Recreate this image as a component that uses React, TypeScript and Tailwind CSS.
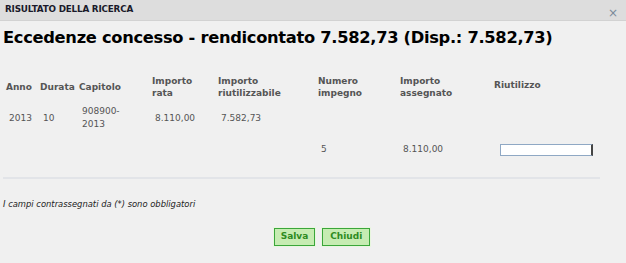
import React from "react";

const font = { fontFamily: '"DejaVu Sans", Verdana, sans-serif' };

export default function App() {
  return (
    <div className="w-[626px] h-[263px] bg-[#f0f0f0] overflow-hidden" style={font}>
      <div className="h-[21px] bg-[#dddddd] border-b border-[#d2d2d2] flex items-center justify-between pl-[5px] pr-[8px]">
        <span className="text-[8.8px] font-bold text-[#1a1a2a] tracking-[-0.2px]">RISULTATO DELLA RICERCA</span>
        <span className="text-[12px] text-[#7a8a9a] leading-none mt-[5px]">×</span>
      </div>
      <h1 className="text-[16.3px] font-bold text-black pl-[3px] pt-[7px] leading-[20px] tracking-[-0.3px]">
        Eccedenze concesso - rendicontato 7.582,73 (Disp.: 7.582,73)
      </h1>
      <div className="h-[136px] text-[9px] text-[#555555]">
        <div className="grid grid-cols-[34px_39px_73px_66px_100px_82px_94px_1fr] pl-[6px] pt-[23px] font-bold leading-[12px] items-center h-[55px]">
          <span>Anno</span>
          <span>Durata</span>
          <span>Capitolo</span>
          <span>Importo<br />rata</span>
          <span>Importo<br />riutilizzabile</span>
          <span>Numero<br />impegno</span>
          <span>Importo<br />assegnato</span>
          <span className="-mt-[4px]">Riutilizzo</span>
        </div>
        <div className="grid grid-cols-[34px_39px_73px_66px_100px_82px_94px_1fr] pl-[9px] leading-[13px] items-center h-[30px]">
          <span>2013</span>
          <span>10</span>
          <span>908900-<br />2013</span>
          <span>8.110,00</span>
          <span>7.582,73</span>
          <span></span>
          <span></span>
          <span></span>
        </div>
        <div className="grid grid-cols-[34px_39px_73px_66px_100px_82px_94px_1fr] pl-[9px] items-center h-[22px] mt-[6px]">
          <span></span>
          <span></span>
          <span></span>
          <span></span>
          <span></span>
          <span>5</span>
          <span>8.110,00</span>
          <span>
            <input
              type="text"
              className="w-[93px] h-[12px] bg-white border border-[#8fa8c4] border-r-2 border-r-[#444] outline-none ml-[3px]"
            />
          </span>
        </div>
        <div className="mx-[3px] w-[597px] h-[2px] bg-[#e2e4e8] mt-[16px]" />
      </div>
      <p className="italic text-[8.4px] text-[#222] pl-[3px] mt-[14px]">
        I campi contrassegnati da (*) sono obbligatori
      </p>
      <div className="flex justify-center gap-[7px] mt-[17px] pl-[18px]">
        <button className="h-[18px] px-[6px] bg-[#c6ecb2] border border-[#3aa63a] text-[#2e8b22] text-[9px] font-bold shadow-[0_0_0_1px_#e8f6df]">
          Salva
        </button>
        <button className="h-[18px] px-[7px] bg-[#c6ecb2] border border-[#3aa63a] text-[#2e8b22] text-[9px] font-bold shadow-[0_0_0_1px_#e8f6df]">
          Chiudi
        </button>
      </div>
    </div>
  );
}
